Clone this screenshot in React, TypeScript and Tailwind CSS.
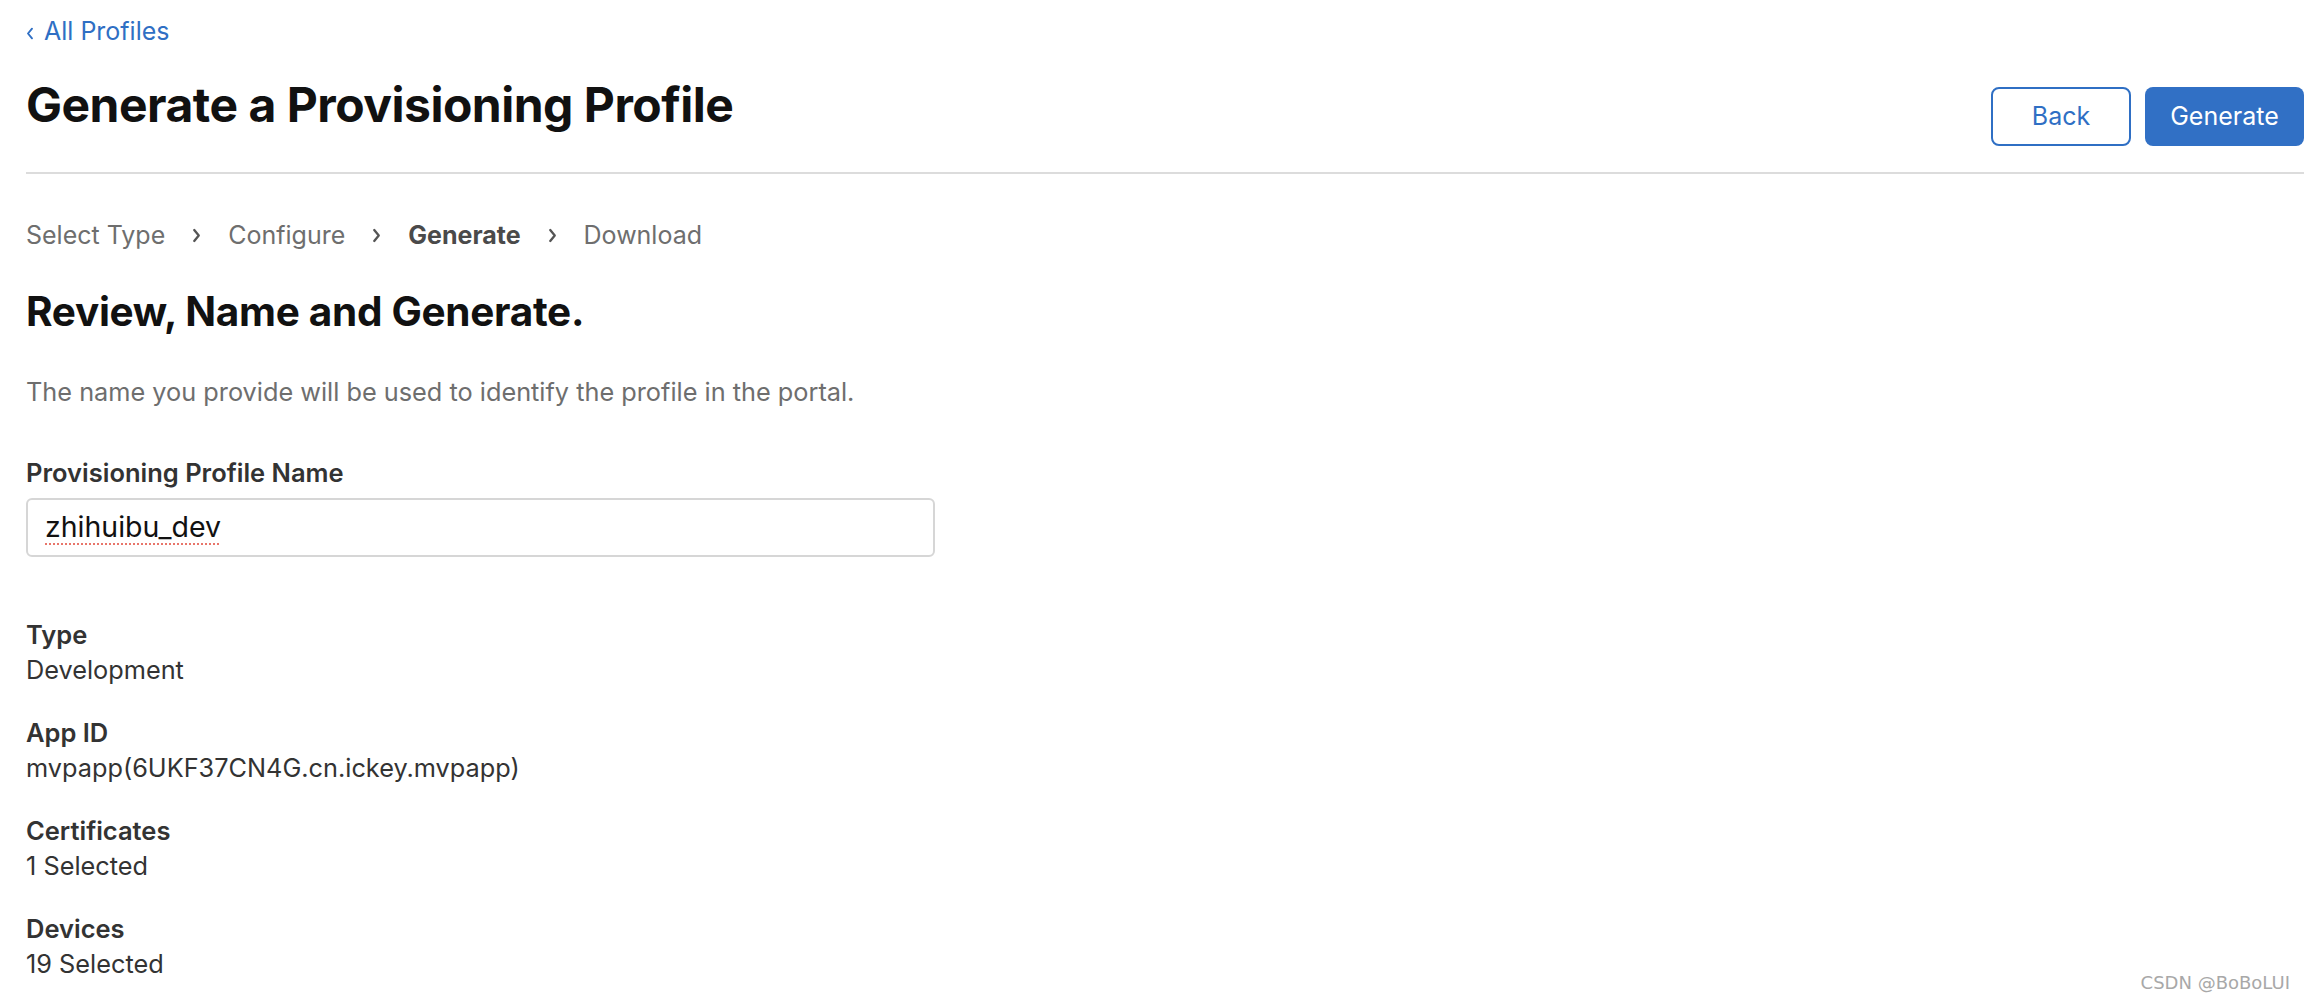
import React from "react";

const steps = [
  { label: "Select Type", active: false },
  { label: "Configure", active: false },
  { label: "Generate", active: true },
  { label: "Download", active: false },
];

const details = [
  { label: "Type", value: "Development" },
  { label: "App ID", value: "mvpapp(6UKF37CN4G.cn.ickey.mvpapp)" },
  { label: "Certificates", value: "1 Selected" },
  { label: "Devices", value: "19 Selected" },
];

function Chevron({ left = false, className = "", stroke = 1.8 }: { left?: boolean; className?: string; stroke?: number }) {
  return (
    <svg viewBox="0 0 10 16" className={className} fill="none" stroke="currentColor" strokeWidth={stroke} strokeLinecap="round" strokeLinejoin="round">
      {left ? <polyline points="7.5,2 2.5,8 7.5,14" /> : <polyline points="2.5,2 7.5,8 2.5,14" />}
    </svg>
  );
}

export default function App() {
  return (
    <div className="min-h-screen bg-white font-['Inter','Liberation_Sans',sans-serif] relative overflow-hidden">
      <div className="pl-[26px] pr-[2px]">
        <a className="flex items-center gap-[10px] pt-[16px] text-[25px] leading-[30px] text-[#2f6fc4]">
          <Chevron left stroke={2.4} className="w-[8px] h-[13px] mt-[4px]" />
          <span>All Profiles</span>
        </a>

        <div className="flex items-start justify-between mt-[31px]">
          <h1 className="text-[48px] leading-[56px] font-bold tracking-[-0.5px] text-[#111111]">
            Generate a Provisioning Profile
          </h1>
          <div className="flex gap-[14px] mt-[10px]">
            <button className="w-[140px] h-[59px] rounded-[8px] border-2 border-[#2f6fc4] text-[#2f6fc4] text-[25px]">
              Back
            </button>
            <button className="w-[159px] h-[59px] rounded-[8px] bg-[#3170c5] text-white text-[25px]">
              Generate
            </button>
          </div>
        </div>

        <div className="mt-[26px] h-[2px] bg-[#dcdcdc]" />

        <nav className="flex items-center mt-[46px] text-[25px] leading-[30px] text-[#6e6e6e]">
          {steps.map((s, i) => (
            <React.Fragment key={s.label}>
              {i > 0 && <Chevron stroke={2.6} className="w-[9px] h-[15px] mx-[27px] text-[#555555]" />}
              <span className={s.active ? "font-bold text-[#4a4a4a]" : ""}>{s.label}</span>
            </React.Fragment>
          ))}
        </nav>

        <h2 className="mt-[38px] text-[40.5px] leading-[48px] font-bold tracking-[-0.3px] text-[#111111]">
          Review, Name and Generate.
        </h2>

        <p className="mt-[41px] text-[25.3px] leading-[30px] text-[#6e6e6e]">
          The name you provide will be used to identify the profile in the portal.
        </p>

        <div className="mt-[51px] text-[25.5px] leading-[30px] font-semibold text-[#333333]">
          Provisioning Profile Name
        </div>
        <div className="mt-[10px] w-[909px] h-[59px] rounded-[6px] border-2 border-[#d6d6d6] flex items-center px-[17px] text-[28.5px] text-[#111111]">
          <span className="underline decoration-dotted decoration-[#e8756a] decoration-2 underline-offset-[6px]">zhihuibu_dev</span>
        </div>

        <div className="mt-[60px] flex flex-col gap-[28px]">
          {details.map((d) => (
            <div key={d.label} className="leading-[35px] text-[#333333]">
              <div className="text-[25.5px] font-semibold">{d.label}</div>
              <div className="text-[25.3px]">{d.value}</div>
            </div>
          ))}
        </div>
      </div>

      <div className="absolute right-[16px] bottom-[10px] text-[18px] text-[#a8a8a8] font-['DejaVu_Sans',sans-serif]">
        CSDN @BoBoLUI
      </div>
    </div>
  );
}
